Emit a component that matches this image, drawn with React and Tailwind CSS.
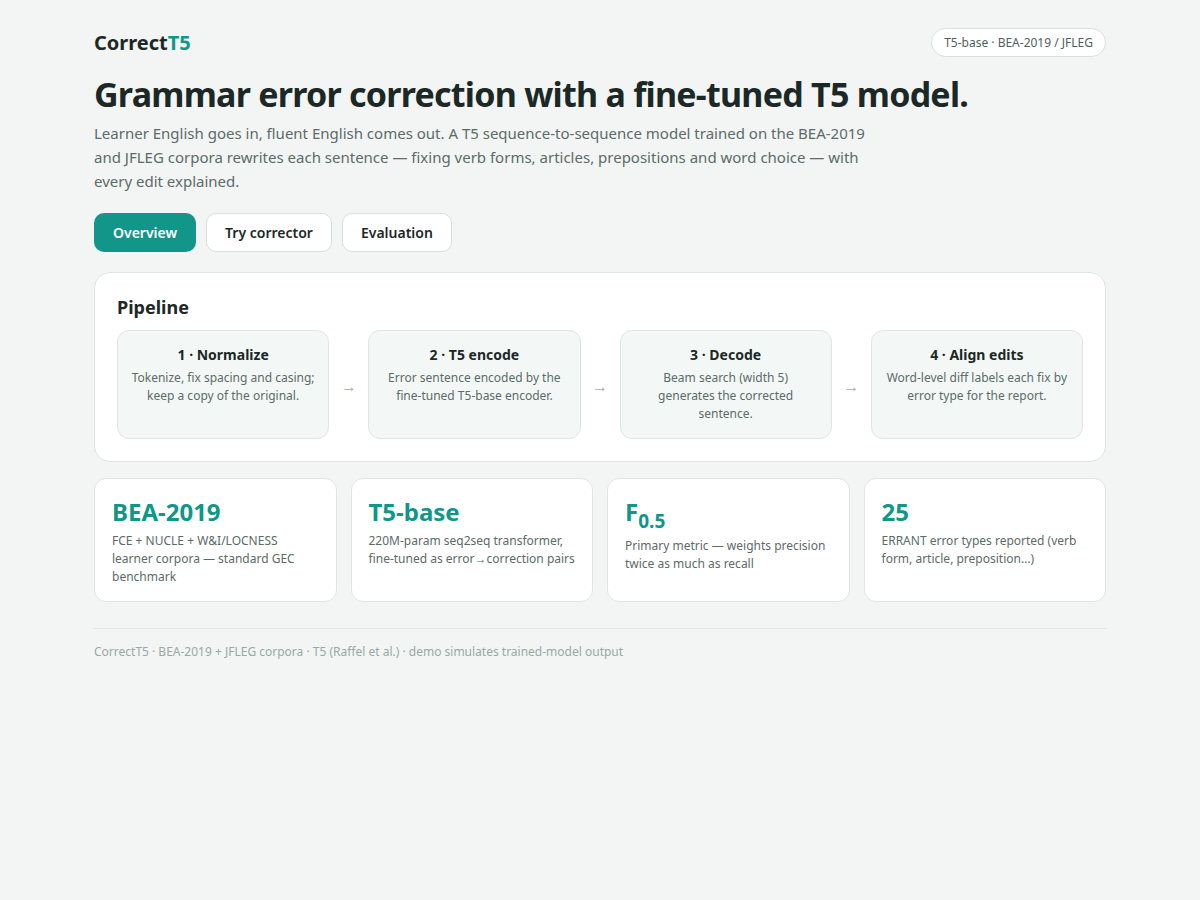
import React from "react";

const steps = [
  {
    title: "1 · Normalize",
    body: "Tokenize, fix spacing and casing; keep a copy of the original.",
  },
  {
    title: "2 · T5 encode",
    body: "Error sentence encoded by the fine-tuned T5-base encoder.",
  },
  {
    title: "3 · Decode",
    body: "Beam search (width 5) generates the corrected sentence.",
  },
  {
    title: "4 · Align edits",
    body: "Word-level diff labels each fix by error type for the report.",
  },
];

const stats = [
  {
    value: "BEA-2019",
    body: "FCE + NUCLE + W&I/LOCNESS learner corpora — standard GEC benchmark",
  },
  {
    value: "T5-base",
    body: "220M-param seq2seq transformer, fine-tuned as error→correction pairs",
  },
  {
    value: (
      <>
        F<span className="inline-block text-[19px] leading-[0] relative top-[7px]">0.5</span>
      </>
    ),
    body: "Primary metric — weights precision twice as much as recall",
    sub: true,
  },
  {
    value: "25",
    body: "ERRANT error types reported (verb form, article, preposition…)",
  },
];

export default function App() {
  return (
    <div
      className="min-h-[900px] bg-[#f3f5f4] text-[#1c2826]"
      style={{ fontFamily: '"Noto Sans", "Open Sans", sans-serif' }}
    >
      <div className="max-w-[1012px] mx-auto pt-[28px]">
        {/* Header */}
        <div className="flex items-center justify-between h-[29px]">
          <div className="text-[20px] font-bold">
            Correct<span className="text-[#12968a]">T5</span>
          </div>
          <div className="h-[29px] px-[12px] flex items-center rounded-full border border-[#d8dfdd] bg-white text-[12px] text-[#4f5f5c]">
            T5-base · BEA-2019 / JFLEG
          </div>
        </div>

        {/* Hero */}
        <h1 className="mt-[15px] text-[34px] leading-[44px] font-bold tracking-[-0.75px]">
          Grammar error correction with a fine-tuned T5 model.
        </h1>
        <p className="mt-[5px] max-w-[790px] text-[15px] leading-[24px] text-[#5b6b68]">
          Learner English goes in, fluent English comes out. A T5 sequence-to-sequence model trained on the BEA-2019
          and JFLEG corpora rewrites each sentence — fixing verb forms, articles, prepositions and word choice — with
          every edit explained.
        </p>

        {/* Tabs */}
        <div className="mt-[20px] flex gap-[10px]">
          <button className="h-[39px] px-[19px] rounded-[10px] bg-[#12968a] text-white text-[14px] font-semibold">
            Overview
          </button>
          <button className="h-[39px] px-[18px] rounded-[10px] bg-white border border-[#d8dfdd] text-[14px] font-semibold text-[#1c2826]">
            Try corrector
          </button>
          <button className="h-[39px] px-[18px] rounded-[10px] bg-white border border-[#d8dfdd] text-[14px] font-semibold text-[#1c2826]">
            Evaluation
          </button>
        </div>

        {/* Pipeline */}
        <div className="mt-[20px] bg-white border border-[#e0e6e4] rounded-[16px] px-[22px] pt-[22px] pb-[22px]">
          <h2 className="text-[18px] leading-[24px] font-bold">Pipeline</h2>
          <div className="mt-[11px] flex items-center">
            {steps.map((s, i) => (
              <React.Fragment key={i}>
                {i > 0 && (
                  <div className="w-[39px] shrink-0 pt-[2px] text-center text-[16px] text-[#a3b0ad]">→</div>
                )}
                <div className="flex-1 h-[109px] rounded-[12px] border border-[#dde6e3] bg-[#f3f8f6] px-[13px] pt-[14px] text-center">
                  <div className="text-[14px] leading-[20px] font-bold">{s.title}</div>
                  <div className="mt-[4px] text-[12px] leading-[18px] text-[#5b6b68]">{s.body}</div>
                </div>
              </React.Fragment>
            ))}
          </div>
        </div>

        {/* Stats */}
        <div className="mt-[16px] grid grid-cols-4 gap-[14px]">
          {stats.map((s, i) => (
            <div
              key={i}
              className="h-[124px] bg-white border border-[#e0e6e4] rounded-[12px] px-[17px] pt-[17px]"
            >
              <div className="text-[24px] leading-[32px] font-bold text-[#12968a]">{s.value}</div>
              <div className={`${s.sub ? "mt-[9px]" : "mt-[4px]"} text-[12px] leading-[18px] text-[#5b6b68]`}>
                {s.body}
              </div>
            </div>
          ))}
        </div>

        {/* Footer */}
        <div className="mt-[26px] border-t border-[#e0e6e4] pt-[14px] text-[12px] text-[#9aa8a5]">
          CorrectT5 · BEA-2019 + JFLEG corpora · T5 (Raffel et al.) · demo simulates trained-model output
        </div>
      </div>
    </div>
  );
}
